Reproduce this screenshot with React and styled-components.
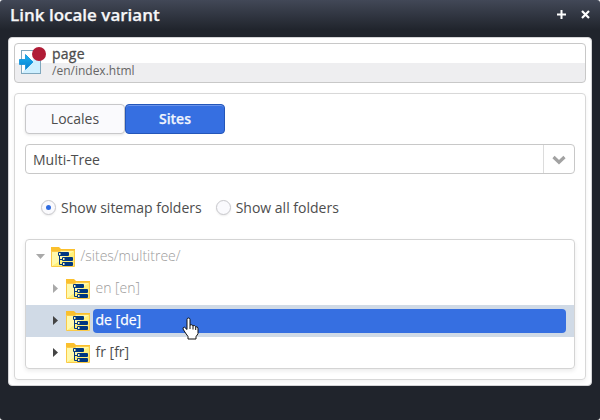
import React from "react";
import styled, { createGlobalStyle } from "styled-components";

const GlobalStyle = createGlobalStyle`
  * { box-sizing: border-box; }
  body {
    margin: 0;
    background: #fff;
    font-family: "Open Sans", sans-serif;
    font-size: 14px;
    line-height: 20px;
    color: #4d4d4d;
  }
  svg { display: block; flex: none; }
`;

const Dialog = styled.div`
  position: relative;
  display: flex;
  flex-direction: column;
  width: 600px;
  height: 420px;
  padding: 0 8px 34px;
  border-radius: 3px;
  background: linear-gradient(#424857 0, #20242c 30px) #20242c;
`;

const TitleBar = styled.header`
  display: flex;
  align-items: center;
  height: 37px;
  padding: 0 2px 7px 2px;
`;

const Title = styled.h1`
  flex: 1;
  margin: 0;
  font-size: 17px;
  font-weight: 600;
  -webkit-text-stroke: 0.25px currentColor;
  line-height: 22px;
  color: #f6f6f8;
`;

const TitleIcons = styled.div`
  display: flex;
  gap: 15px;
  margin-top: -1px;
  align-items: center;
`;

const Content = styled.main`
  flex: 1;
  display: flex;
  flex-direction: column;
  gap: 10px;
  padding: 5px;
  border: 1px solid #d4d4d6;
  border-radius: 4px;
  background: #fff;
`;

const ResourceBox = styled.section`
  display: flex;
  height: 40px;
  padding: 3px 4px;
  gap: 5px;
  border: 1px solid #c8c8c8;
  border-radius: 4px;
  background: linear-gradient(#fff 19px, #eeeef0 19px);
`;

const ResourceName = styled.div`
  font-size: 14px;
  font-weight: 400;
  letter-spacing: 0.25px;
  -webkit-text-stroke: 0.3px currentColor;
  line-height: 14px;
`;

const ResourcePath = styled.div`
  font-size: 12px;
  line-height: 16px;
  margin-top: 2px;
  color: #666;
`;

const Panel = styled.section`
  flex: 1;
  display: flex;
  flex-direction: column;
  padding: 10px;
  border: 1px solid #d8d8d8;
  border-radius: 4px;
  box-shadow: 0 2px 4px rgba(0, 0, 0, 0.06);
`;

const Tabs = styled.div`
  display: flex;
  margin-bottom: 10px;
`;

const Tab = styled.button`
  width: 100px;
  height: 30px;
  padding: 0 0 1px;
  border: 1px solid ${(p) => (p.$active ? "#2456b9" : "#c8c8ca")};
  border-radius: 4px;
  background: ${(p) => (p.$active ? "#366fe1" : "#fafafd")};
  box-shadow: ${(p) =>
    p.$active ? "inset 0 1px #6b94ea" : "0 1px 3px rgba(0, 0, 0, 0.1)"};
  font: ${(p) => (p.$active ? 600 : 400)} 14px "Open Sans", sans-serif;
  -webkit-text-stroke: ${(p) => (p.$active ? "0.25px currentColor" : "0")};
  color: ${(p) => (p.$active ? "#f0f4fd" : "#4d4d4d")};
`;

const Select = styled.div`
  display: flex;
  height: 30px;
  border: 1px solid #c8c8c8;
  border-radius: 4px;
`;

const SelectValue = styled.span`
  flex: 1;
  padding: 5px 7px;
`;

const SelectArrow = styled.span`
  display: flex;
  align-items: center;
  justify-content: center;
  width: 31px;
  padding-top: 2px;
  border-left: 1px solid #dcdcdc;
`;

const RadioRow = styled.div`
  display: flex;
  align-items: center;
  gap: 14px;
  height: 65px;
  padding: 3px 0 0 16px;
`;

const Radio = styled.label`
  display: flex;
  align-items: center;
  gap: 5px;
`;

const RadioMark = styled.span`
  display: flex;
  align-items: center;
  justify-content: center;
  width: 15px;
  height: 15px;
  margin-top: -1px;
  border: 1px solid #c8c8cc;
  border-radius: 50%;
  background: #fafafd;
  box-shadow: 0 1px 2px rgba(0, 0, 0, 0.08);

  &::after {
    content: "";
    width: 5px;
    height: 5px;
    border-radius: 50%;
    background: ${(p) => (p.$checked ? "#2f6be0" : "transparent")};
  }
`;

const Tree = styled.div`
  height: 130px;
  padding-top: 1px;
  border: 1px solid #d4d4d4;
  border-radius: 4px;
  box-shadow: 0 2px 4px rgba(0, 0, 0, 0.08);
`;

const TreeRow = styled.div`
  position: relative;
  display: flex;
  align-items: center;
  height: 32px;
  padding: 0 8px 0 ${(p) => 8 + p.$level * 15}px;
  background: ${(p) => (p.$selected ? "#d0dae6" : "transparent")};
  color: ${(p) => (p.$disabled ? "#9c9c9c" : "#4d4d4d")};
  font-weight: ${(p) => (p.$disabled ? 300 : 400)};
`;

const Toggle = styled.span`
  display: flex;
  align-items: center;
  justify-content: center;
  width: 13px;
  height: 9px;
  margin: -2px 4px 0 0;
  color: ${(p) => (p.$disabled ? "#a9a9a9" : "#444")};
`;

const NodeLabel = styled.span`
  flex: 1;
  height: 24px;
  margin-left: 3px;
  padding: 1px 2.5px;
  border-radius: 4px;
  background: ${(p) => (p.$selected ? "#366fe1" : "transparent")};
  color: ${(p) => (p.$selected ? "#fff" : "inherit")};
  -webkit-text-stroke: ${(p) => (p.$selected ? "0.25px currentColor" : "0")};
`;

const Pointer = styled.svg`
  position: absolute;
  left: 156px;
  top: 12px;
`;

const PageIcon = () => (
  <svg width="28" height="28" viewBox="0 0 28 28">
    <defs>
      <linearGradient id="sheet" x1="0" y1="0" x2="1" y2="1">
        <stop offset=".48" stopColor="#fff" />
        <stop offset=".52" stopColor="#cdefff" />
      </linearGradient>
      <linearGradient id="arrow" x1="0" y1="0" x2="0" y2="1">
        <stop offset="0" stopColor="#19b5f3" />
        <stop offset="1" stopColor="#087dcf" />
      </linearGradient>
    </defs>
    <rect x="2.5" y="3.5" width="19" height="23" fill="url(#sheet)" stroke="#7fa7bd" />
    <path d="M.5 12.500h6v-5l7.500 7.500-7.500 7.500v-5h-6z" fill="url(#arrow)" stroke="#0b8fd8" strokeWidth=".8" />
    <circle cx="20" cy="7" r="7" fill="#b01c36" />
  </svg>
);

const FolderIcon = () => (
  <svg width="24" height="20" viewBox="0 0 24 20">
    <defs>
      <linearGradient id="folder" x1="0" y1="0" x2="1" y2="1">
        <stop offset=".49" stopColor="#fff9ac" />
        <stop offset=".51" stopColor="#fff27c" />
        <stop offset="1" stopColor="#ffe877" />
      </linearGradient>
    </defs>
    <path d="M0 0h8l2 2h14v4H0z" fill="#fbc02d" />
    <path d="M.5 4.500h8l2-1h13v16H.5z" fill="url(#folder)" stroke="#fbca48" />
    <path d="M8.500 8v9.500H13M8.500 12.500H13" fill="none" stroke="#003781" />
    <g fill="#003781">
      <rect x="7" y="5" width="11" height="4" rx="1" />
      <rect x="11" y="10" width="11" height="4" rx="1" />
      <rect x="11" y="15" width="11" height="4" rx="1" />
    </g>
    <path d="M8 6h1.500v2H8zM12 11h1.500v2H12zM12 16h1.500v2H12z" fill="#fff6b0" />
  </svg>
);

const HandCursor = () => (
  <Pointer width="18" height="24" viewBox="0 0 18 24">
    <path
      d="M5 2.500Q5 1 6.500 1T8 2.500V8q2-.8 3 .7 2-.7 2.700 1 2.300-.2 2.300 2v5l-2 3V22H6v-2.500L3.500 16 1 12q-.3-1.800 1.500-1.800L5 12.500z"
      fill="#fff"
      stroke="#111"
    />
    <path d="M8 8v4M11 9v3.500M13.700 10v3" stroke="#111" fill="none" />
  </Pointer>
);

const nodes = [
  { label: "/sites/multitree/", level: 0, open: true, disabled: true },
  { label: "en [en]", level: 1, disabled: true },
  { label: "de [de]", level: 1, selected: true },
  { label: "fr [fr]", level: 1 },
];

function TreeNode({ node }) {
  return (
    <TreeRow $level={node.level} $selected={node.selected} $disabled={node.disabled}>
      <Toggle $disabled={node.disabled}>
        {node.open ? (
          <svg width="9" height="5" viewBox="0 0 9 5">
            <path d="M0 0h9L4.500 5z" fill="currentColor" />
          </svg>
        ) : (
          <svg width="5" height="9" viewBox="0 0 5 9">
            <path d="M0 0v9l5-4.500z" fill="currentColor" />
          </svg>
        )}
      </Toggle>
      <FolderIcon />
      <NodeLabel $selected={node.selected}>{node.label}</NodeLabel>
      {node.selected && <HandCursor />}
    </TreeRow>
  );
}

export default function App() {
  return (
    <>
      <GlobalStyle />
      <Dialog>
        <TitleBar>
          <Title>Link locale variant</Title>
          <TitleIcons>
            <svg width="9" height="9" viewBox="0 0 9 9">
              <path d="M4.500 0v9M0 4.500h9" stroke="#fff" strokeWidth="2" />
            </svg>
            <svg width="9" height="9" viewBox="0 0 9 9">
              <path d="M1 1l7 7M8 1L1 8" stroke="#fff" strokeWidth="2.200" />
            </svg>
          </TitleIcons>
        </TitleBar>
        <Content>
          <ResourceBox>
            <PageIcon />
            <div>
              <ResourceName>page</ResourceName>
              <ResourcePath>/en/index.html</ResourcePath>
            </div>
          </ResourceBox>
          <Panel>
            <Tabs>
              <Tab>Locales</Tab>
              <Tab $active>Sites</Tab>
            </Tabs>
            <Select>
              <SelectValue>Multi-Tree</SelectValue>
              <SelectArrow>
                <svg width="14" height="10" viewBox="0 0 14 10">
                  <path d="M1.500 2L7 7.200 12.500 2" fill="none" stroke="#a2a2a2" strokeWidth="3.200" />
                </svg>
              </SelectArrow>
            </Select>
            <RadioRow>
              <Radio>
                <RadioMark $checked />
                Show sitemap folders
              </Radio>
              <Radio>
                <RadioMark />
                Show all folders
              </Radio>
            </RadioRow>
            <Tree>
              {nodes.map((node) => (
                <TreeNode key={node.label} node={node} />
              ))}
            </Tree>
          </Panel>
        </Content>
      </Dialog>
    </>
  );
}
